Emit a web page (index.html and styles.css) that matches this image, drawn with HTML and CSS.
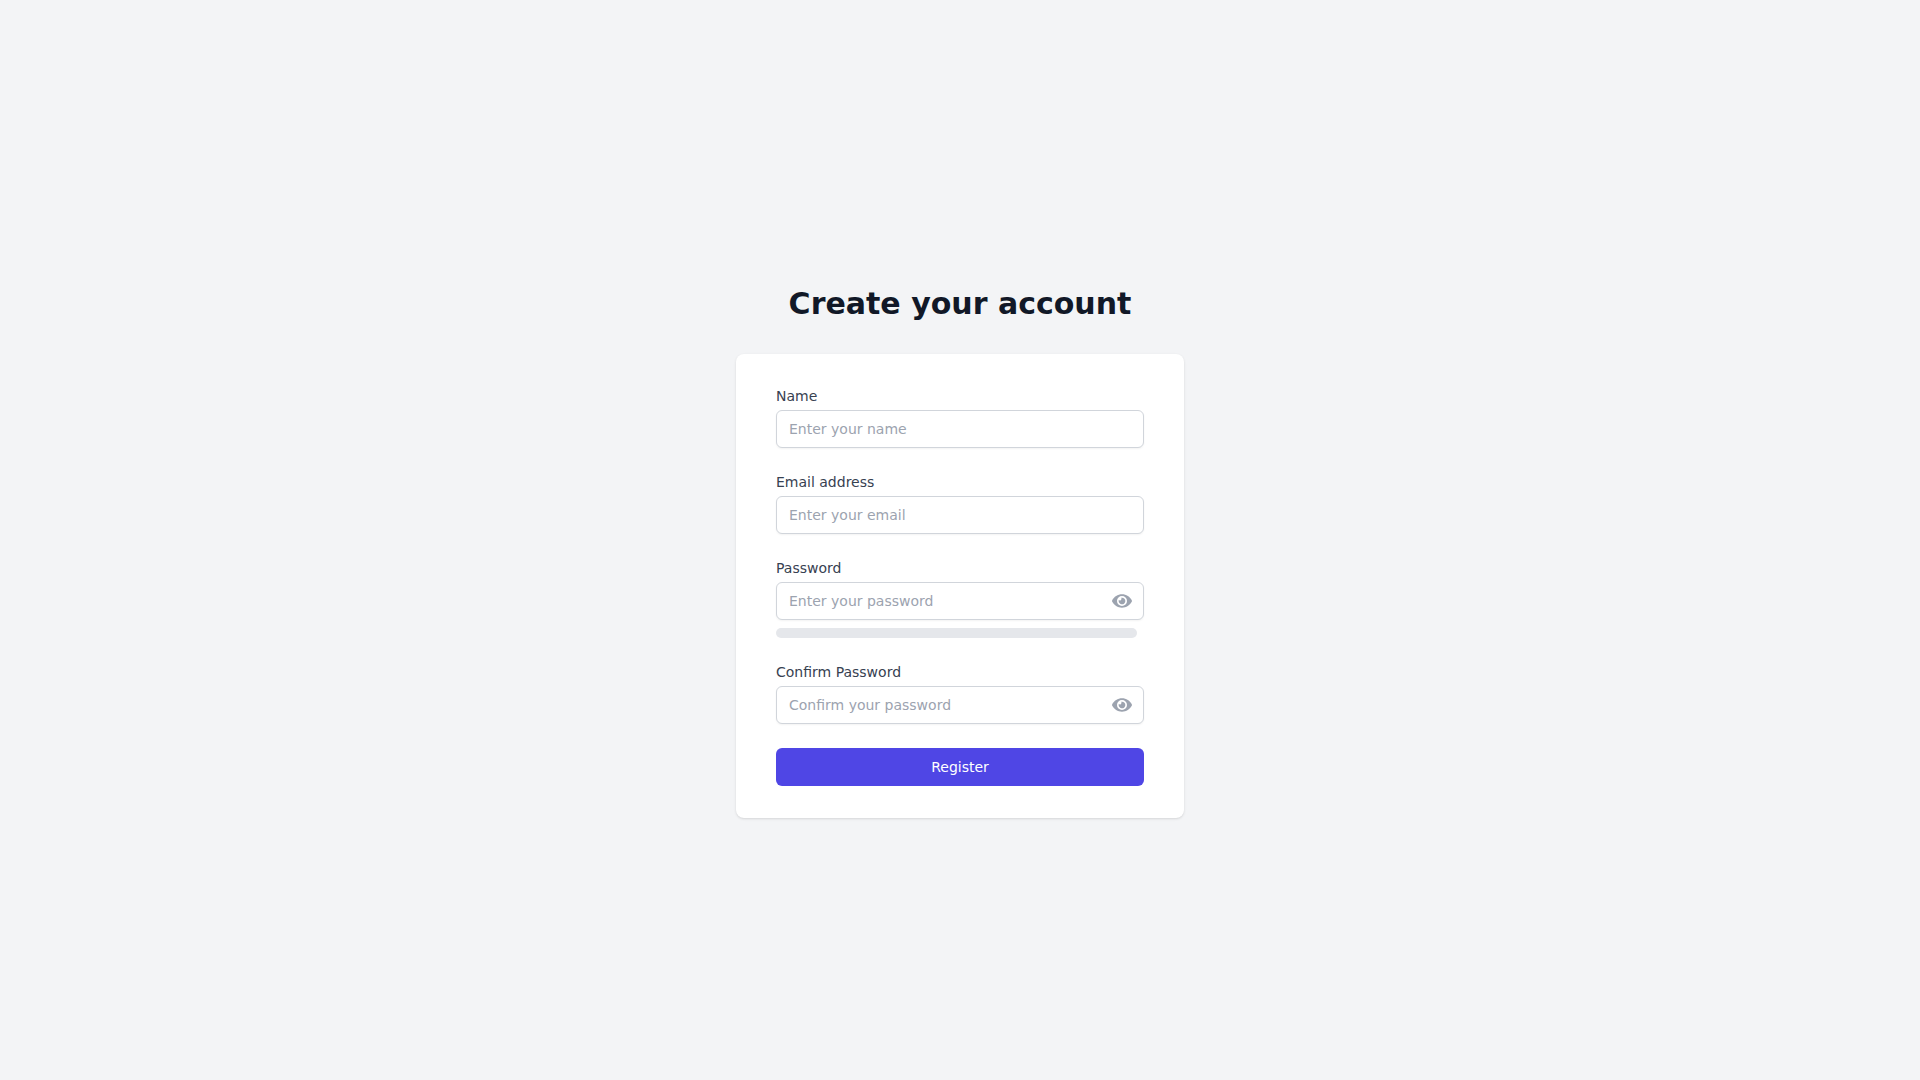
FILE: index.html
```html
<!DOCTYPE html>
<html lang="en">
<head>
    <meta charset="UTF-8">
    <meta name="viewport" content="width=device-width, initial-scale=1.0">
    <title>Register</title>
    <link rel="stylesheet" href="styles.css">
</head>
<body>
    <main class="container">
        <h1>Create your account</h1>

        <form id="registerForm" class="card">
            <div class="field">
                <label for="name">Name</label>
                <input type="text" id="name" name="name" placeholder="Enter your name" required>
            </div>

            <div class="field">
                <label for="email">Email address</label>
                <input type="email" id="email" name="email" placeholder="Enter your email" required>
            </div>

            <div class="field">
                <label for="password">Password</label>
                <div class="password-box">
                    <input type="password" id="password" name="password" placeholder="Enter your password" required>
                    <button type="button" class="toggle" aria-label="Show password" onclick="togglePassword('password')">
                        <svg viewBox="0 0 576 512" aria-hidden="true"><path d="M572.52 241.4C518.29 135.59 410.93 64 288 64S57.68 135.64 3.48 241.41a32.35 32.35 0 0 0 0 29.19C57.71 376.41 165.07 448 288 448s230.32-71.64 284.52-177.41a32.35 32.35 0 0 0 0-29.19zM288 400a144 144 0 1 1 144-144 143.93 143.93 0 0 1-144 144zm0-240a95.31 95.31 0 0 0-25.31 3.79 47.85 47.85 0 0 1-66.9 66.9A95.78 95.78 0 1 0 288 160z"/></svg>
                    </button>
                </div>
                <div class="strength"></div>
            </div>

            <div class="field">
                <label for="confirmPassword">Confirm Password</label>
                <div class="password-box">
                    <input type="password" id="confirmPassword" name="confirmPassword" placeholder="Confirm your password" required>
                    <button type="button" class="toggle" aria-label="Show confirmed password" onclick="togglePassword('confirmPassword')">
                        <svg viewBox="0 0 576 512" aria-hidden="true"><path d="M572.52 241.4C518.29 135.59 410.93 64 288 64S57.68 135.64 3.48 241.41a32.35 32.35 0 0 0 0 29.19C57.71 376.41 165.07 448 288 448s230.32-71.64 284.52-177.41a32.35 32.35 0 0 0 0-29.19zM288 400a144 144 0 1 1 144-144 143.93 143.93 0 0 1-144 144zm0-240a95.31 95.31 0 0 0-25.31 3.79 47.85 47.85 0 0 1-66.9 66.9A95.78 95.78 0 1 0 288 160z"/></svg>
                    </button>
                </div>
            </div>

            <button type="submit" class="submit">Register</button>
        </form>
    </main>

    <script>
        function togglePassword(id) {
            var input = document.getElementById(id);
            input.type = input.type === 'password' ? 'text' : 'password';
        }
    </script>
</body>
</html>
```
FILE: styles.css
```css
* {
    box-sizing: border-box;
}

body {
    margin: 0;
    min-height: 100vh;
    display: flex;
    justify-content: center;
    align-items: center;
    background-color: #f3f4f6;
    font-family: "DejaVu Sans", sans-serif;
    font-size: 14px;
    line-height: 20px;
}

.container {
    width: 100%;
    max-width: 448px;
}

h1 {
    margin: 24px 0 32px;
    color: #111827;
    font-size: 30px;
    line-height: 36px;
    font-weight: bold;
    text-align: center;
}

.card {
    display: flex;
    flex-direction: column;
    gap: 24px;
    padding: 32px 40px;
    background-color: #fff;
    border-radius: 8px;
    box-shadow: 0 1px 3px rgba(0, 0, 0, 0.1), 0 1px 2px -1px rgba(0, 0, 0, 0.1);
}

label {
    display: block;
    margin-bottom: 4px;
    color: #374151;
}

input {
    display: block;
    width: 100%;
    padding: 8px 12px;
    border: 1px solid #d1d5db;
    border-radius: 6px;
    box-shadow: 0 1px 2px rgba(0, 0, 0, 0.05);
    font: inherit;
    height: 38px;
}

input::placeholder {
    color: #9ca3af;
}

input:focus {
    outline: none;
    border-color: #6366f1;
}

.password-box {
    position: relative;
}

.password-box input {
    padding-right: 40px;
}

/* eye button sits over the right end of the input */
.toggle {
    position: absolute;
    top: 0;
    bottom: 0;
    right: 0;
    display: flex;
    align-items: center;
    padding: 0 12px;
    border: none;
    background: none;
    color: #9ca3af;
    cursor: pointer;
}

.toggle svg {
    width: 20px;
    height: 20px;
    fill: currentColor;
}

.strength {
    width: 98%;
    height: 10px;
    margin-top: 8px;
    background-color: #e5e7eb;
    border-radius: 5px;
}

.submit {
    height: 38px;
    padding: 8px 16px;
    border: none;
    border-radius: 6px;
    background-color: #4f46e5;
    color: #fff;
    font: inherit;
    cursor: pointer;
}

.submit:hover {
    background-color: #4338ca;
}
```
